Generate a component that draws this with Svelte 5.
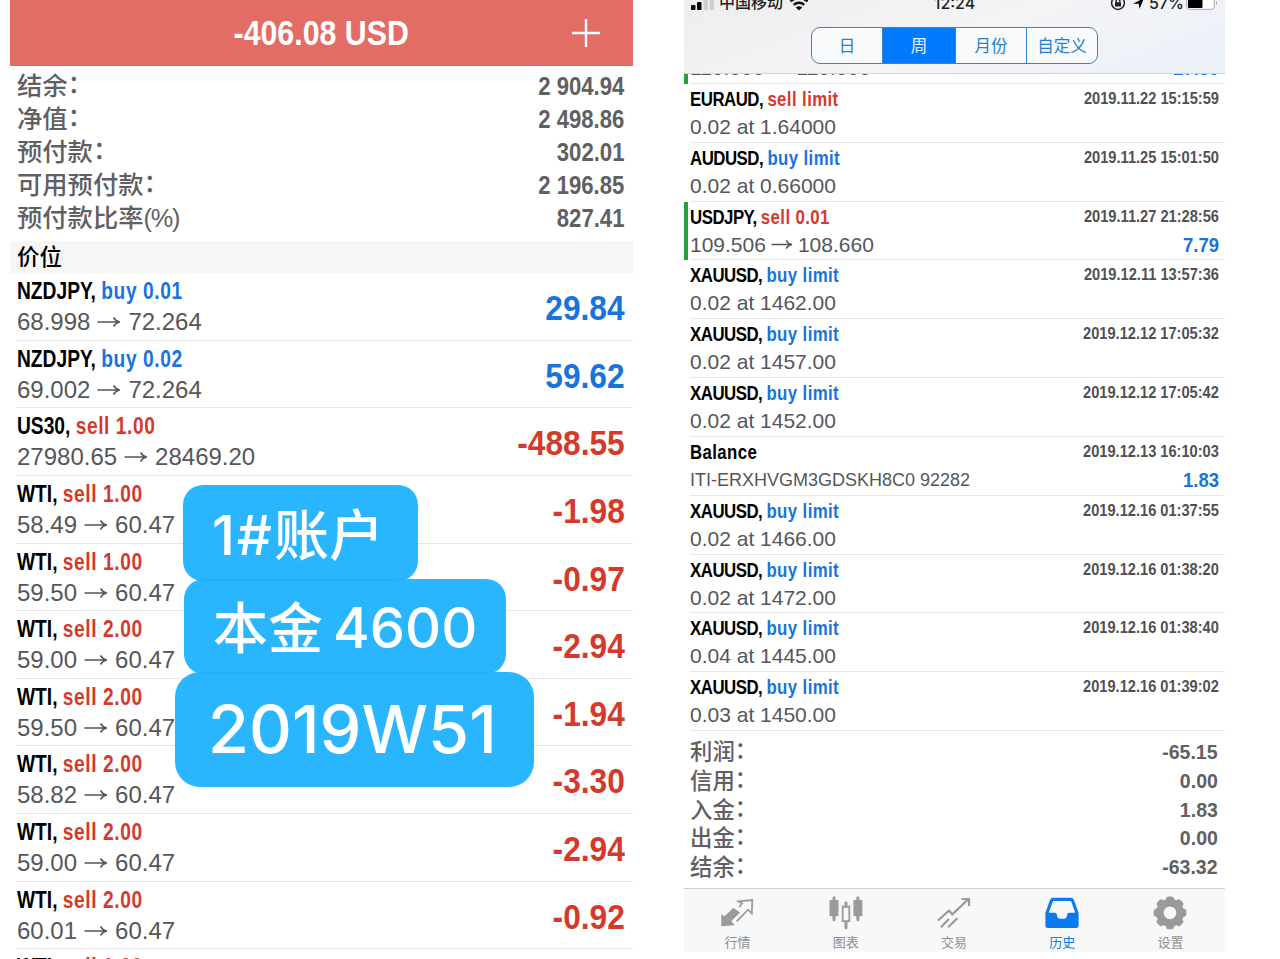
<script lang="ts">
  interface Summary {
    label: string
    unit?: string
    value: string
  }

  interface Position {
    symbol: string
    side: 'buy' | 'sell'
    volume: string
    open: string
    current: string
    profit: string
  }

  interface Deal {
    symbol: string
    action?: string
    side?: 'buy' | 'sell'
    time: string
    detail: string
    to?: string
    profit?: string
    closed?: boolean
    comment?: boolean
  }

  const account: Summary[] = [
    { label: '结余', value: '2 904.94' },
    { label: '净值', value: '2 498.86' },
    { label: '预付款', value: '302.01' },
    { label: '可用预付款', value: '2 196.85' },
    { label: '预付款比率', unit: '(%)', value: '827.41' }
  ]

  const positions: Position[] = [
    { symbol: 'NZDJPY', side: 'buy', volume: '0.01', open: '68.998', current: '72.264', profit: '29.84' },
    { symbol: 'NZDJPY', side: 'buy', volume: '0.02', open: '69.002', current: '72.264', profit: '59.62' },
    { symbol: 'US30', side: 'sell', volume: '1.00', open: '27980.65', current: '28469.20', profit: '-488.55' },
    { symbol: 'WTI', side: 'sell', volume: '1.00', open: '58.49', current: '60.47', profit: '-1.98' },
    { symbol: 'WTI', side: 'sell', volume: '1.00', open: '59.50', current: '60.47', profit: '-0.97' },
    { symbol: 'WTI', side: 'sell', volume: '2.00', open: '59.00', current: '60.47', profit: '-2.94' },
    { symbol: 'WTI', side: 'sell', volume: '2.00', open: '59.50', current: '60.47', profit: '-1.94' },
    { symbol: 'WTI', side: 'sell', volume: '2.00', open: '58.82', current: '60.47', profit: '-3.30' },
    { symbol: 'WTI', side: 'sell', volume: '2.00', open: '59.00', current: '60.47', profit: '-2.94' },
    { symbol: 'WTI', side: 'sell', volume: '2.00', open: '60.01', current: '60.47', profit: '-0.92' },
    { symbol: 'WTI', side: 'sell', volume: '1.00', open: '60.01', current: '60.47', profit: '-0.46' }
  ]

  const deals: Deal[] = [
    { symbol: 'USDJPY', action: 'sell 0.01', side: 'sell', time: '2019.11.21 10:20:36', detail: '110.000', to: '110.000', profit: '27.39', closed: true },
    { symbol: 'EURAUD', action: 'sell limit', side: 'sell', time: '2019.11.22 15:15:59', detail: '0.02 at 1.64000' },
    { symbol: 'AUDUSD', action: 'buy limit', side: 'buy', time: '2019.11.25 15:01:50', detail: '0.02 at 0.66000' },
    { symbol: 'USDJPY', action: 'sell 0.01', side: 'sell', time: '2019.11.27 21:28:56', detail: '109.506', to: '108.660', profit: '7.79', closed: true },
    { symbol: 'XAUUSD', action: 'buy limit', side: 'buy', time: '2019.12.11 13:57:36', detail: '0.02 at 1462.00' },
    { symbol: 'XAUUSD', action: 'buy limit', side: 'buy', time: '2019.12.12 17:05:32', detail: '0.02 at 1457.00' },
    { symbol: 'XAUUSD', action: 'buy limit', side: 'buy', time: '2019.12.12 17:05:42', detail: '0.02 at 1452.00' },
    { symbol: 'Balance', time: '2019.12.13 16:10:03', detail: 'ITI-ERXHVGM3GDSKH8C0 92282', profit: '1.83', comment: true },
    { symbol: 'XAUUSD', action: 'buy limit', side: 'buy', time: '2019.12.16 01:37:55', detail: '0.02 at 1466.00' },
    { symbol: 'XAUUSD', action: 'buy limit', side: 'buy', time: '2019.12.16 01:38:20', detail: '0.02 at 1472.00' },
    { symbol: 'XAUUSD', action: 'buy limit', side: 'buy', time: '2019.12.16 01:38:40', detail: '0.04 at 1445.00' },
    { symbol: 'XAUUSD', action: 'buy limit', side: 'buy', time: '2019.12.16 01:39:02', detail: '0.03 at 1450.00' }
  ]

  const totals: Summary[] = [
    { label: '利润', value: '-65.15' },
    { label: '信用', value: '0.00' },
    { label: '入金', value: '1.83' },
    { label: '出金', value: '0.00' },
    { label: '结余', value: '-63.32' }
  ]

  const periods = ['日', '周', '月份', '自定义']
  let period = $state('周')

  const tabs = ['行情', '图表', '交易', '历史', '设置']
  let tab = $state('历史')

  const teeth = [0, 45, 90, 135, 180, 225, 270, 315]
</script>

{#snippet arrow()}
  <svg class="arrow" viewBox="0 0 24 12" aria-hidden="true">
    <path d="M0.5 6H22.5M16.5 1.5C18 4 20 5.5 22.8 6C20 6.5 18 8 16.5 10.5" />
  </svg>
{/snippet}

<div class="page">
  <section class="trade">
    <header class="trade-header">
      <h1><span>-406.08 USD</span></h1>
      <button class="add" aria-label="add">
        <svg viewBox="0 0 28 28"><path d="M14 0V28M0 14H28" /></svg>
      </button>
    </header>

    <div class="account">
      {#each account as row}
        <div class="account-row">
          <div>
            {row.label}{#if row.unit}<span class="unit">{row.unit}</span>{:else}<span class="colon">：</span>{/if}
          </div>
          <b>{row.value}</b>
        </div>
      {/each}
    </div>

    <h2 class="band">价位</h2>

    <div class="positions">
      {#each positions as p}
        <div class="position">
          <div>
            <div class="title">{p.symbol}, <span class={p.side}>{p.side} {p.volume}</span></div>
            <div class="price">{p.open}{@render arrow()}{p.current}</div>
          </div>
          <div class="profit" class:sell={p.profit.startsWith('-')}>{p.profit}</div>
        </div>
      {/each}
    </div>

    <div class="note note--account"><span>1#</span>账户</div>
    <div class="note note--capital">本金<span>4600</span></div>
    <div class="note note--week">2019W51</div>
  </section>

  <section class="history">
    <header class="history-header">
      <div class="status">
        <div class="status-side">
          <svg class="signal" viewBox="0 0 24 16">
            <rect x="0" y="10" width="4.5" height="5" rx="1" />
            <rect x="6" y="7" width="4.5" height="8" rx="1" />
            <rect class="off" x="12.5" y="4" width="4.5" height="11" rx="1" />
            <rect class="off" x="18.5" y="0" width="4.5" height="15" rx="1" />
          </svg>
          <span>中国移动</span>
          <svg class="wifi" viewBox="0 0 20 15">
            <path d="M1.5 5.5C6 1 14 1 18.5 5.5M4.8 8.8C7.5 6 12.5 6 15.2 8.8" />
            <path class="dot" d="M10 14.6L6.8 11.4C8.5 9.8 11.5 9.8 13.2 11.4Z" />
          </svg>
        </div>
        <span class="clock">12:24</span>
        <div class="status-side">
          <svg class="lock" viewBox="0 0 16 16">
            <circle cx="8" cy="8" r="6.4" />
            <path d="M6.2 7.5V6a1.8 1.8 0 0 1 3.6 0V7.5" />
            <rect x="5" y="7.2" width="6" height="4.3" />
          </svg>
          <svg class="locate" viewBox="0 0 13 13"><path d="M1 6.8L12 1L7.5 12L6.8 6.8Z" /></svg>
          <span class="percent">57%</span>
          <svg class="battery" viewBox="0 0 32 14">
            <rect class="shell" x="0.7" y="0.7" width="27.6" height="12.6" rx="3" />
            <rect x="2" y="2" width="14.5" height="10" rx="1" />
            <path class="cap" d="M30 5C31.3 5.5 31.3 8.5 30 9Z" />
          </svg>
        </div>
      </div>
      <div class="segmented">
        {#each periods as p}
          <button class:active={p === period} onclick={() => (period = p)}>{p}</button>
        {/each}
      </div>
    </header>

    <div class="deals">
      <div class="deals-scroll">
        {#each deals as d}
          <div class="deal" class:closed={d.closed}>
            <div class="deal-line">
              <div class="title">
                {#if d.action}{d.symbol}, <span class={d.side}>{d.action}</span>{:else}<span>{d.symbol}</span>{/if}
              </div>
              <time>{d.time}</time>
            </div>
            <div class="deal-line deal-line--detail">
              <div class="price" class:comment={d.comment}>
                {d.detail}{#if d.to}{@render arrow()}{d.to}{/if}
              </div>
              {#if d.profit}<b class="amount">{d.profit}</b>{/if}
            </div>
          </div>
        {/each}
      </div>
    </div>

    <div class="totals">
      {#each totals as row}
        <div class="totals-row">
          <div>{row.label}<span class="colon">：</span></div>
          <b>{row.value}</b>
        </div>
      {/each}
    </div>

    <nav class="tabbar">
      {#each tabs as name, i}
        <button class="tab" class:current={name === tab} onclick={() => (tab = name)}>
          <svg viewBox="0 0 36 36">
            {#if i === 0}
              <path class="fill" d="M1.3 32.3V20.3L4.7 22.3L13.3 13.7L20 18.5L11.3 27.3L14.7 31.3Z" />
              <path class="line" d="M19.3 13L22 9.5L18.3 7.3L32.3 6L31.8 19.5L28 15.7L16.7 27.3" />
            {:else if i === 1}
              <rect class="fill" x="1.5" y="6" width="9" height="16.3" rx="1" />
              <rect class="fill" x="25.4" y="6" width="9" height="16.3" rx="1" />
              <path class="wick" d="M6 3.7V25.7M29.9 3.7V25.7M18 8.7V12.5M18 27.5V33.7" />
              <rect class="line" x="14.7" y="12.6" width="6.6" height="14.6" />
            {:else if i === 2}
              <path class="line bold" d="M2 26.5L13 16.5L16.3 20.3L32.3 5.3M25.5 5H33V12M4.8 33.3L13 25M12.2 33.3L21.3 24.3" />
            {:else if i === 3}
              <path
                class="fill"
                fill-rule="evenodd"
                d="M9 3.8H27Q29 3.8 30 6L34.6 19V31.5Q34.6 34 32 34H4Q1.4 34 1.4 31.5V19L6 6Q7 3.8 9 3.8ZM10 7Q9 7 8.5 8.2L4.8 18.7H11Q12.6 18.7 12.8 20.5Q13.2 24.7 16 24.7H20Q22.8 24.7 23.2 20.5Q23.4 18.7 25 18.7H31.2L27.5 8.2Q27 7 26 7Z"
              />
            {:else}
              <circle class="gear" cx="18" cy="18.8" r="10.2" />
              {#each teeth as angle}
                <rect class="fill" x="14" y="2.4" width="8" height="8" rx="2.8" transform="rotate({angle} 18 18.8)" />
              {/each}
            {/if}
          </svg>
          <span>{name}</span>
        </button>
      {/each}
    </nav>
  </section>
</div>

<style>
  :global(body) {
    background: #fff;
    overflow: hidden;
  }

  .page {
    display: flex;
    gap: 51px;
    width: 1280px;
    height: 959px;
    padding-left: 10px;
    box-sizing: border-box;
    overflow: hidden;
    font-family: 'Liberation Sans', 'Noto Sans CJK SC', sans-serif;
    color: #000;
  }

  button {
    padding: 0;
    border: none;
    background: none;
    font: inherit;
  }

  svg {
    display: block;
  }

  .buy {
    color: #1873dc;
  }

  .sell {
    color: #d43a2c;
  }

  .title {
    font-weight: 700;
    white-space: nowrap;
    transform: scaleX(0.8);
    transform-origin: left;
  }

  .price {
    color: #55565a;
    white-space: nowrap;
  }

  .arrow {
    display: inline-block;
    width: 24px;
    height: 12px;
    margin: 0 7px;
    vertical-align: 2px;
    fill: none;
    stroke: #55565a;
    stroke-width: 1.5;
  }

  .colon {
    display: inline-block;
    transform: translateY(-2px);
  }

  /* open positions */
  .trade {
    position: relative;
    width: 623px;
    height: 959px;
    overflow: hidden;
  }

  .trade-header {
    display: grid;
    grid-template-columns: 1fr auto;
    align-items: center;
    height: 66px;
    background: #e36d64;
    color: #fff;
  }

  .trade-header h1 {
    margin: 0;
    padding-left: 60px;
    font-size: 35px;
    line-height: 66px;
    text-align: center;
  }

  .trade-header h1 span {
    display: inline-block;
    transform: scaleX(0.866);
  }

  .add {
    padding-right: 33px;
  }

  .add svg {
    width: 28px;
    height: 28px;
    fill: none;
    stroke: #fff;
    stroke-width: 2.4;
  }

  .account {
    height: 175px;
    padding: 4px 9px 0 7px;
    box-sizing: border-box;
    color: #5f6062;
  }

  .account-row {
    display: flex;
    justify-content: space-between;
    height: 33px;
    font-size: 25.3px;
    line-height: 33px;
    font-weight: 500;
  }

  .unit {
    letter-spacing: -1.2px;
  }

  .account-row b {
    font-size: 25px;
    transform: scaleX(0.885);
    transform-origin: right;
  }

  .band {
    margin: 0;
    padding-left: 7px;
    height: 32px;
    background: #f6f6f7;
    font-size: 22.5px;
    line-height: 34px;
    font-weight: 500;
  }

  .positions {
    padding-left: 7px;
  }

  .position {
    display: flex;
    justify-content: space-between;
    height: 67.65px;
    padding-right: 8px;
    box-sizing: border-box;
    border-bottom: 1.5px solid #e6e6e8;
  }

  .position .title {
    padding-top: 2px;
    font-size: 24px;
    line-height: 31px;
  }

  .position .title span {
    letter-spacing: 0.7px;
  }

  .position .price {
    font-size: 24px;
    line-height: 32px;
  }

  .profit {
    font-size: 35px;
    line-height: 69px;
    font-weight: 700;
    transform: scaleX(0.905);
    transform-origin: right;
  }

  .profit:not(.sell) {
    color: #1873dc;
  }

  /* stickers laid over the list */
  .note {
    position: absolute;
    display: flex;
    align-items: center;
    box-sizing: border-box;
    background: rgba(33, 178, 255, 0.96);
    color: #fff;
    font-family: Inter, 'Noto Sans CJK SC', sans-serif;
    font-weight: 500;
    border-radius: 20px;
    white-space: nowrap;
  }

  .note--account {
    left: 173px;
    top: 485px;
    width: 235px;
    height: 96px;
    padding: 0 0 5px 29px;
    font-size: 55px;
  }

  .note--account span {
    padding-top: 8px;
    letter-spacing: 2px;
  }

  .note--capital {
    left: 174px;
    top: 579px;
    width: 322px;
    height: 95px;
    padding: 0 0 5px 29px;
    font-size: 55px;
    gap: 10px;
  }

  .note--capital span {
    padding-top: 7px;
    font-size: 56px;
  }

  .note--week {
    left: 165px;
    top: 672px;
    width: 359px;
    height: 115px;
    padding: 0 0 1px 33px;
    font-size: 66.5px;
    border-radius: 25px;
  }

  /* history */
  .history {
    display: flex;
    flex-direction: column;
    width: 541px;
    height: 952px;
  }

  .history-header {
    height: 74px;
    box-sizing: border-box;
    border-bottom: 1px solid #d3d4d8;
    background: linear-gradient(160deg, #eeeeef, #f4f4f6 50%, #ebf0f8);
    overflow: hidden;
  }

  .status {
    display: grid;
    grid-template-columns: 1fr auto 1fr;
    align-items: center;
    height: 24px;
    margin-top: -9px;
    padding: 0 7px;
    font-size: 16px;
    line-height: 24px;
    font-weight: 500;
    color: #222;
  }

  .status-side {
    display: flex;
    align-items: center;
  }

  .status-side:last-child {
    justify-content: flex-end;
  }

  .signal {
    width: 24px;
    height: 16px;
    margin-right: 4px;
  }

  .signal .off {
    fill: #cfcfd1;
  }

  .wifi {
    width: 20px;
    height: 15px;
    margin-left: 6px;
    fill: none;
    stroke: #111;
    stroke-width: 2.4;
  }

  .wifi .dot {
    fill: #111;
    stroke: none;
  }

  .clock,
  .percent {
    font-family: Inter, sans-serif;
    font-size: 16px;
  }

  .lock {
    width: 16px;
    height: 16px;
    margin-right: 6px;
    fill: none;
    stroke: #222;
    stroke-width: 1.5;
  }

  .lock rect {
    fill: #222;
    stroke: none;
  }

  .locate {
    width: 13px;
    height: 13px;
    margin-right: 4px;
  }

  .battery {
    width: 32px;
    height: 14px;
    margin-left: 2px;
  }

  .battery .shell {
    fill: #fff;
    stroke: #aaa;
  }

  .battery .cap {
    fill: #999;
  }

  .segmented {
    display: grid;
    grid-template-columns: 70px 73px 71px 1fr;
    width: 287px;
    height: 37px;
    margin: 12px auto 0;
    box-sizing: border-box;
    border: 1.5px solid #3187cf;
    border-radius: 9px;
    background: #f9fafc;
    overflow: hidden;
  }

  .segmented button {
    color: #2380cc;
    font-size: 16.5px;
    line-height: 34px;
  }

  .segmented button + button {
    border-left: 1px solid #3187cf;
  }

  .segmented .active {
    background: #007aff;
    color: #e6f5ff;
  }

  .deals {
    height: 657px;
    overflow: hidden;
  }

  .deals-scroll {
    margin-top: -48.8px;
  }

  .deal {
    height: 58.82px;
    padding: 1px 6px 0 6px;
    box-sizing: border-box;
    background: linear-gradient(#e6e6e8, #e6e6e8) 6px 100% / 100% 1px no-repeat;
  }

  .deal.closed {
    border-left: 4px solid #22a338;
    padding-left: 2px;
    background-position: 2px 100%;
  }

  .deal-line {
    display: flex;
    justify-content: space-between;
    height: 28px;
    line-height: 28px;
  }

  .deal-line--detail {
    line-height: 27px;
  }

  .deal .title {
    font-size: 21px;
    letter-spacing: -0.6px;
  }

  .deal .title span {
    letter-spacing: 0.5px;
  }

  .deal .price {
    font-size: 21px;
  }

  .deal .arrow {
    width: 22px;
    height: 11px;
    margin: 0 5px;
  }

  .deal .price.comment {
    font-size: 18px;
    line-height: 28px;
  }

  .deal time {
    font-size: 17px;
    font-weight: 700;
    line-height: 28px;
    color: #4f5054;
    transform: scaleX(0.86);
    transform-origin: right;
  }

  .amount {
    color: #1873dc;
    font-size: 20.5px;
    line-height: 27px;
    transform: scaleX(0.9);
    transform-origin: right;
  }

  .totals {
    flex: 1;
    padding: 8px 7px 0 6px;
    color: #5f6062;
  }

  .totals-row {
    display: flex;
    justify-content: space-between;
    height: 28.8px;
    font-size: 22.4px;
    line-height: 28.8px;
    font-weight: 500;
  }

  .totals-row b {
    font-size: 21px;
    line-height: 25px;
    transform: scaleX(0.93);
    transform-origin: right;
  }

  .tabbar {
    display: grid;
    grid-template-columns: repeat(5, 1fr);
    height: 64px;
    box-sizing: border-box;
    border-top: 1px solid #cfcfd2;
    background: #f8f8f9;
  }

  .tab {
    display: flex;
    flex-direction: column;
    align-items: center;
    padding: 5px 1px 0 0;
    color: #8e8e90;
    font-size: 13px;
    line-height: 26px;
  }

  .tab svg {
    width: 36px;
    height: 36px;
    color: #9a9a9b;
  }

  .tab.current,
  .tab.current svg {
    color: #0b79f0;
  }

  .tab .fill {
    fill: currentColor;
  }

  .tab .line {
    fill: none;
    stroke: currentColor;
    stroke-width: 1.8;
  }

  .tab .bold {
    stroke-width: 2.2;
  }

  .tab .wick {
    fill: none;
    stroke: currentColor;
    stroke-width: 3;
    stroke-linecap: round;
  }

  .tab .gear {
    fill: none;
    stroke: currentColor;
    stroke-width: 7.6;
  }
</style>
